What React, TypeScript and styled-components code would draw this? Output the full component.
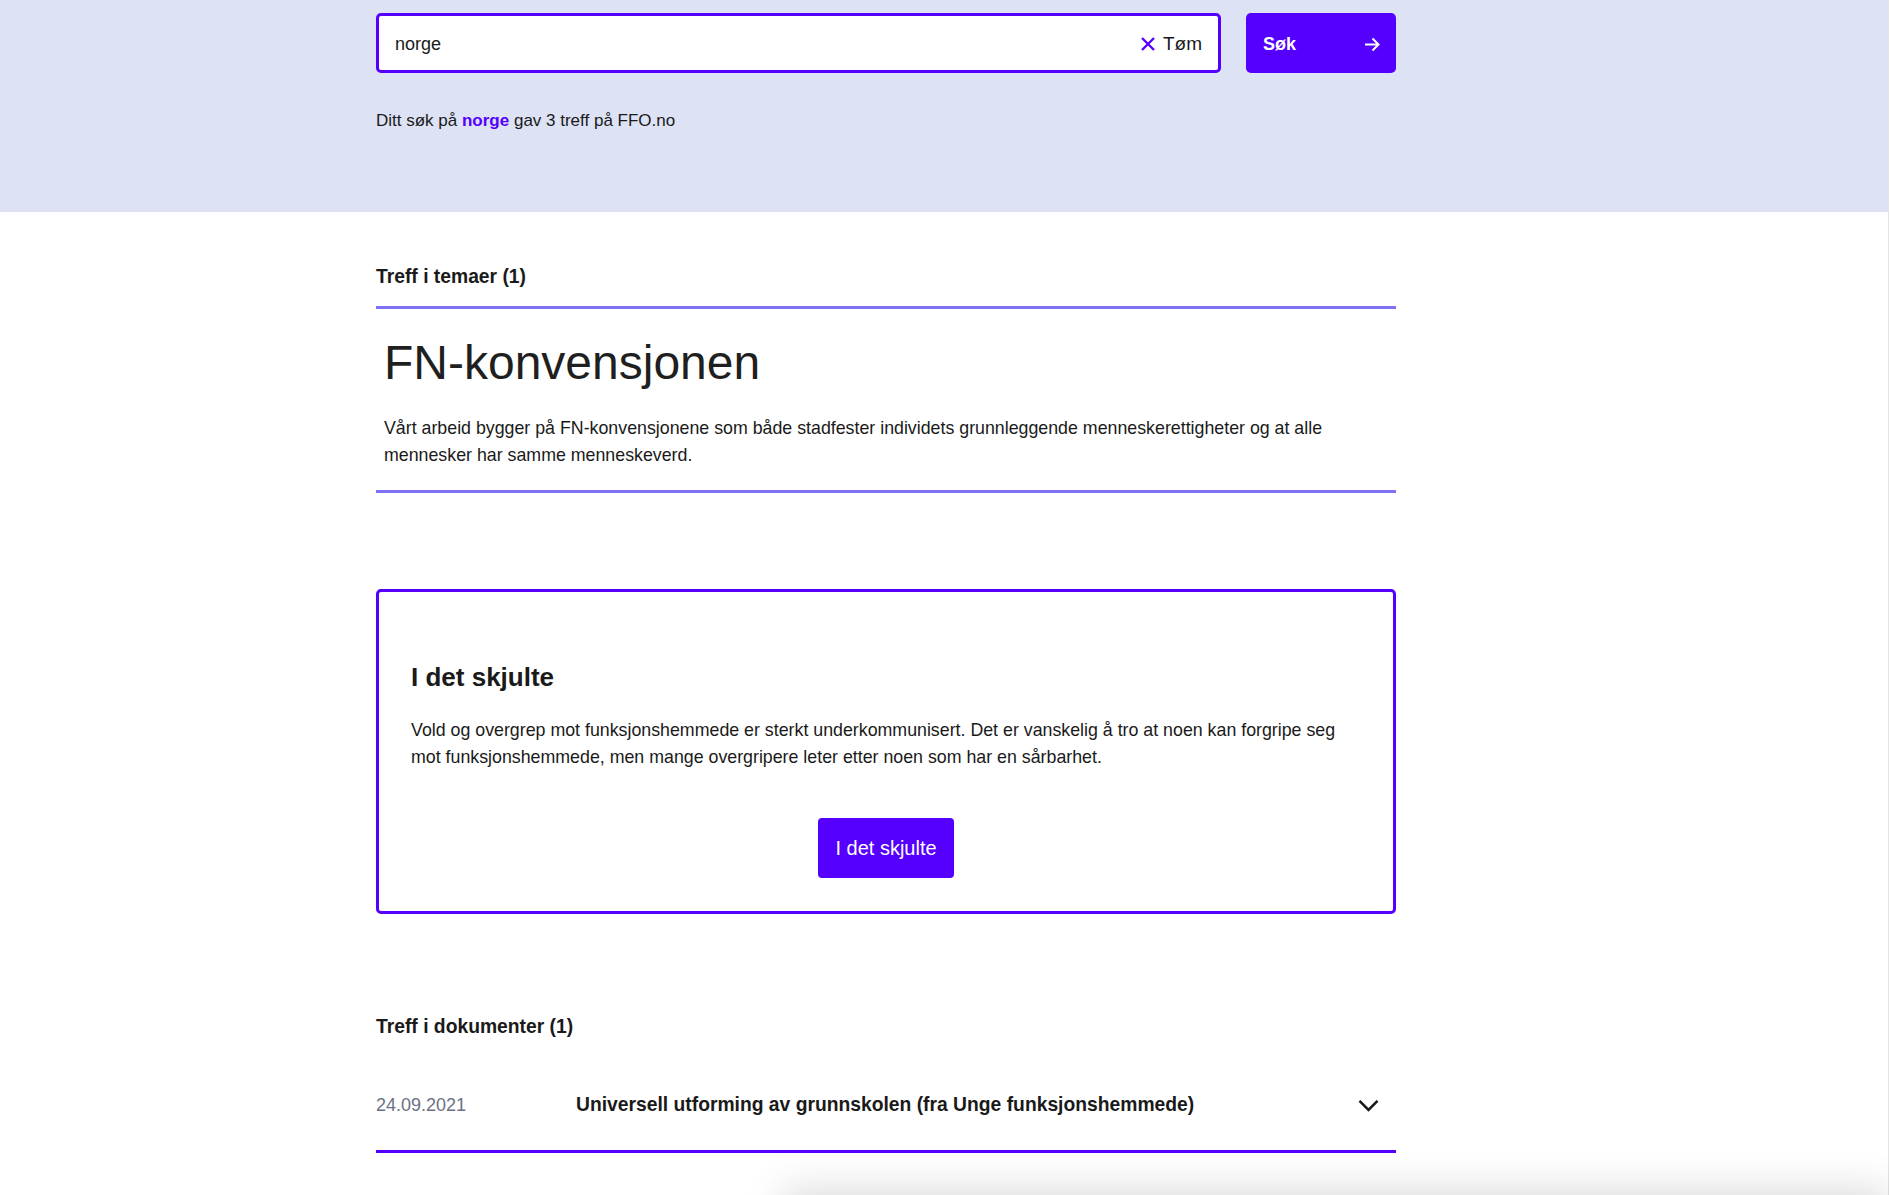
import { createGlobalStyle } from 'styled-components';
import styled from 'styled-components';

const purple = '#5500ff';

const GlobalStyle = createGlobalStyle`
  body {
    margin: 0;
    font-family: 'Liberation Sans', Arial, sans-serif;
    color: #1a1a1a;
    background: #fff;
    border-right: 1px solid #e4e4e4;
  }
  * {
    box-sizing: border-box;
  }
`;

const SearchHeader = styled.header`
  background: #dde2f5;
  height: 212px;
  padding-top: 13px;
`;

const Container = styled.div`
  width: 1020px;
  margin-left: 376px;
`;

const SearchRow = styled.form`
  display: flex;
  gap: 25px;
`;

const InputBox = styled.div`
  flex: 1;
  height: 60px;
  border: 3px solid ${purple};
  border-radius: 5px;
  background: #fff;
  display: flex;
  align-items: center;
  padding: 2px 16px 0 16px;
`;

const Input = styled.input`
  flex: 1;
  border: none;
  outline: none;
  background: transparent;
  font-family: inherit;
  font-size: 18px;
  color: #1a1a1a;
  padding: 0;
`;

const ClearButton = styled.button`
  display: flex;
  align-items: center;
  gap: 8px;
  border: none;
  background: none;
  padding: 0;
  font-family: inherit;
  font-size: 19px;
  color: #1a1a1a;
`;

const SubmitButton = styled.button`
  width: 150px;
  height: 60px;
  border: none;
  border-radius: 5px;
  background: ${purple};
  color: #fff;
  font-family: inherit;
  font-size: 18px;
  font-weight: bold;
  display: flex;
  align-items: center;
  justify-content: space-between;
  padding: 2px 16px 0 17px;
`;

const Summary = styled.p`
  margin: 36px 0 0;
  font-size: 17px;
  line-height: 24px;

  strong {
    color: ${purple};
  }
`;

const Main = styled.main`
  padding-top: 53px;
  padding-bottom: 200px;
`;

const SectionTitle = styled.h2<{ $gap: number }>`
  margin: 0 0 ${(p) => p.$gap}px;
  font-size: 19.3px;
  line-height: 24px;
  font-weight: bold;
`;

const ThemeItem = styled.article`
  border-top: 3px solid #8072f7;
  border-bottom: 3px solid #8072f7;
  padding: 26px 8px 21px;
`;

const ThemeTitle = styled.h3`
  margin: 0;
  font-size: 48px;
  line-height: 56px;
  font-weight: normal;
  color: #1f1f1f;
`;

const Text = styled.p<{ $top: number }>`
  margin: ${(p) => p.$top}px 0 0;
  font-size: 17.8px;
  line-height: 27px;
`;

const Card = styled.section`
  margin: 96px 0 101px;
  border: 3px solid ${purple};
  border-radius: 5px;
  padding: 69px 32px 33px;
  display: flex;
  flex-direction: column;
`;

const CardTitle = styled.h3`
  margin: 0;
  font-size: 26px;
  line-height: 32px;
  font-weight: bold;
`;

const CardButton = styled.a`
  align-self: center;
  margin-top: 47px;
  height: 60px;
  padding: 0 17px;
  display: flex;
  align-items: center;
  background: ${purple};
  border-radius: 4px;
  color: #fff;
  font-size: 20px;
  text-decoration: none;
`;

const DocRow = styled.div`
  margin-top: 27px;
  display: grid;
  grid-template-columns: 200px 1fr auto;
  align-items: center;
  padding: 28px 17px 34px 0;
  border-bottom: 3px solid ${purple};
`;

const DocDate = styled.span`
  font-size: 18px;
  line-height: 22px;
  color: #6b7185;
`;

const DocTitle = styled.span`
  font-size: 19.3px;
  line-height: 22px;
  font-weight: bold;
`;

const BannerShadow = styled.div`
  position: fixed;
  left: 783px;
  right: 0;
  top: 100vh;
  height: 80px;
  background: #fff;
  box-shadow: 0 -6px 40px rgba(0, 0, 0, 0.14);
`;

const CloseIcon = () => (
  <svg width='14' height='14' viewBox='0 0 14 14'>
    <path d='M1 1L13 13M13 1L1 13' stroke={purple} strokeWidth='2.4' />
  </svg>
);

const ArrowIcon = () => (
  <svg width='16' height='15' viewBox='0 0 16 15'>
    <path
      d='M1 7.5H14.5M8.5 1.5L14.5 7.5L8.5 13.5'
      stroke='#fff'
      strokeWidth='2'
      fill='none'
    />
  </svg>
);

const ChevronIcon = () => (
  <svg width='21' height='13' viewBox='0 0 21 13'>
    <path
      d='M1.5 1.8L10.5 10.8L19.5 1.8'
      stroke='#1a1a1a'
      strokeWidth='2.6'
      fill='none'
    />
  </svg>
);

const App = () => {
  const query = 'norge';

  return (
    <>
      <GlobalStyle />
      <SearchHeader>
        <Container>
          <SearchRow onSubmit={(e) => e.preventDefault()}>
            <InputBox>
              <Input defaultValue={query} />
              <ClearButton type='button'>
                <CloseIcon />
                Tøm
              </ClearButton>
            </InputBox>
            <SubmitButton type='submit'>
              Søk
              <ArrowIcon />
            </SubmitButton>
          </SearchRow>
          <Summary>
            Ditt søk på <strong>{query}</strong> gav 3 treff på FFO.no
          </Summary>
        </Container>
      </SearchHeader>

      <Main>
        <Container>
          <SectionTitle $gap={17}>Treff i temaer (1)</SectionTitle>
          <ThemeItem>
            <ThemeTitle>FN-konvensjonen</ThemeTitle>
            <Text $top={24}>
              Vårt arbeid bygger på FN-konvensjonene som både stadfester
              individets grunnleggende menneskerettigheter og at alle
              mennesker har samme menneskeverd.
            </Text>
          </ThemeItem>

          <Card>
            <CardTitle>I det skjulte</CardTitle>
            <Text $top={24}>
              Vold og overgrep mot funksjonshemmede er sterkt
              underkommunisert. Det er vanskelig å tro at noen kan forgripe seg
              mot funksjonshemmede, men mange overgripere leter etter noen som
              har en sårbarhet.
            </Text>
            <CardButton href='#'>I det skjulte</CardButton>
          </Card>

          <SectionTitle $gap={0}>Treff i dokumenter (1)</SectionTitle>
          <DocRow>
            <DocDate>24.09.2021</DocDate>
            <DocTitle>
              Universell utforming av grunnskolen (fra Unge funksjonshemmede)
            </DocTitle>
            <ChevronIcon />
          </DocRow>
        </Container>
      </Main>
      <BannerShadow />
    </>
  );
};

export default App;
